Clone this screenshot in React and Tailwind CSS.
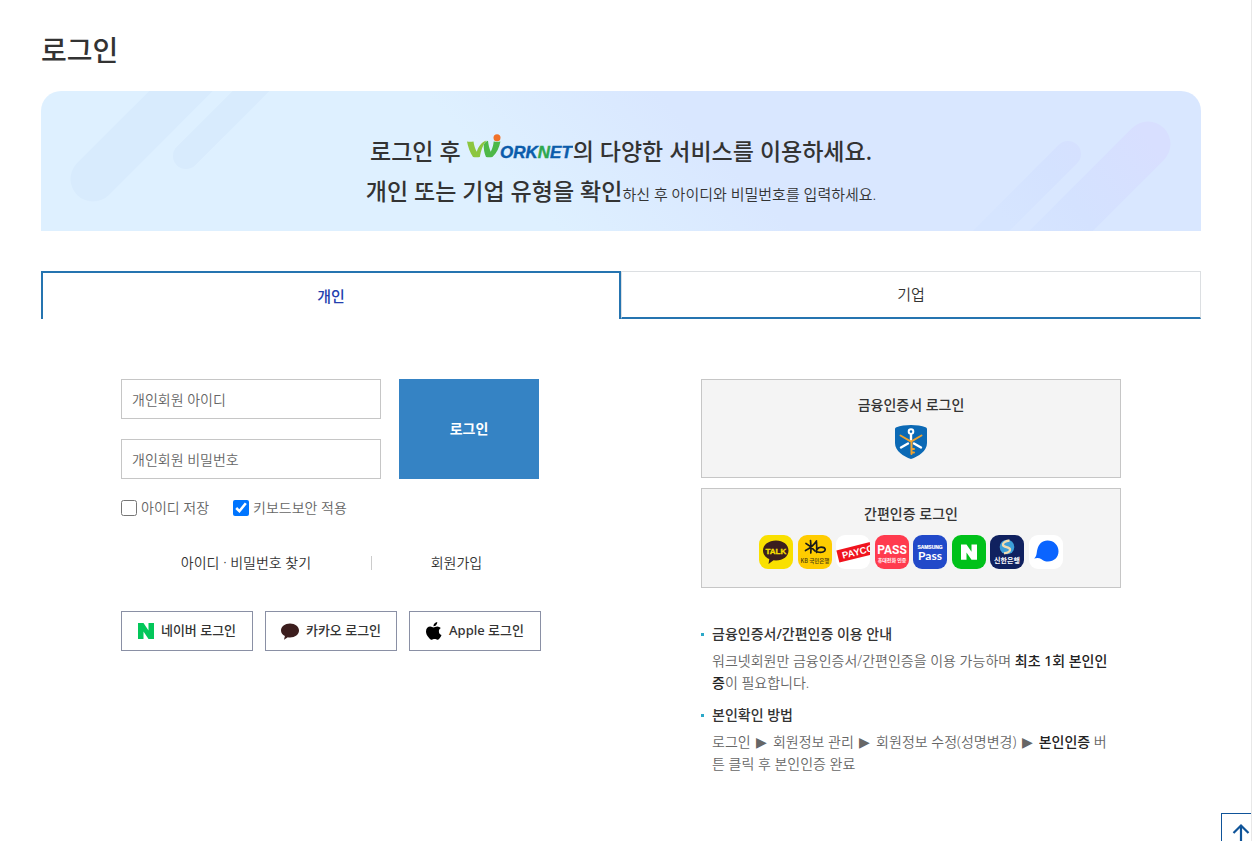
import React, { useState } from "react";

const fieldClass =
  "h-10 w-full border border-[#c6c6c6] bg-white px-[10px] text-sm text-[#333] placeholder:text-[#666] outline-none focus:border-[#2574b0]";

function WorknetLogo() {
  return (
    <svg className="inline-block h-[26px] w-[106px] align-baseline" viewBox="0 0 106 26" role="img" aria-label="WORKNET">
      <path d="M0 7.500c2.500 .6 4.500 .4 6.500-.1 .6 4 1.600 7.300 3.300 10.300C11.500 12.500 14 8.500 19.500 6.500c-3.500 4-5.600 10-6.700 16.500-2 .4-4.600 .4-6.800 0C3 18.500 1 13 0 7.500z" fill="#8cc63f" />
      <path d="M16.800 10.500c1.200-2 2.600-3.200 4.200-3.700 .5 4 1.200 7.500 2.700 11 1.800-3.200 2.600-6.500 3-10.300 2.300 .5 4.500 .4 6.700-.1-1 6-3.600 11.300-8 15.600-2.200 .5-4.400 .4-6.400 0-1.800-4-2.400-8-2.200-12.500z" fill="#4db848" />
      <circle cx="30" cy="3.800" r="3.500" fill="#f1722a" />
      <text x="33" y="23.500" fontFamily="'Liberation Sans', sans-serif" fontSize="17" fontWeight="700" fontStyle="italic" fill="#0b5cab" stroke="#0b5cab" strokeWidth=".4">
        ORK<tspan fill="#2fa84f" stroke="#2fa84f">N</tspan>ET
      </text>
    </svg>
  );
}

function BannerShapes() {
  return (
    <>
      <svg className="absolute left-0 top-0 h-[140px] w-[240px]" viewBox="0 0 240 140" aria-hidden="true">
        <g stroke="#d8ebfd" strokeLinecap="round">
          <path d="M52 88 160-20" strokeWidth="45" />
          <path d="M145 65 225-15" strokeWidth="26" />
        </g>
      </svg>
      <svg className="absolute right-0 top-0 h-[140px] w-[240px]" viewBox="0 0 240 140" aria-hidden="true">
        <defs>
          <linearGradient id="violet" gradientUnits="userSpaceOnUse" x1="60" y1="150" x2="190" y2="50">
            <stop offset="0" stopColor="#d6e5ff" />
            <stop offset="0.4" stopColor="#d4e2ff" />
            <stop offset="1" stopColor="#d8dfff" />
          </linearGradient>
        </defs>
        <g stroke="url(#violet)" strokeLinecap="round">
          <path d="M187 53 67 173" strokeWidth="45" />
          <path d="M107 63 0 170" strokeWidth="26" />
        </g>
      </svg>
    </>
  );
}

function NaverMark() {
  return (
    <svg className="size-[16px]" viewBox="0 0 16 16" aria-hidden="true">
      <path d="M0 0h5.500l5 7.500V0H16v16h-5.500l-5-7.500V16H0z" fill="#03c75a" />
    </svg>
  );
}

function KakaoMark() {
  return (
    <svg className="h-[17px] w-[18px]" viewBox="0 0 18 17" aria-hidden="true">
      <path d="M9 .5c5 0 9 3 9 6.900s-4 7-9 7c-.8 0-1.500-.1-2.200-.2L3 16.800l.9-3.900C1.500 11.700 0 9.700 0 7.400 0 3.500 4 .5 9 .5z" fill="#3c1e1e" />
    </svg>
  );
}

function AppleMark() {
  return (
    <svg className="h-[18px] w-[16px]" viewBox="0 0 16 18" aria-hidden="true">
      <path d="M11.200 0c.2 1.100-.3 2.200-1 3-.7.8-1.700 1.300-2.700 1.200-.1-1.100.4-2.100 1-2.800C9.200.6 10.300.1 11.200 0zM14.800 6c-1.300.8-2 1.900-1.900 3.400 0 1.700 1 2.900 2.600 3.500-.4 1.200-1 2.300-1.800 3.300-.6.9-1.300 1.500-2.300 1.500s-1.500-.6-2.800-.6-1.900.6-2.800.6c-1.100 0-1.900-.8-2.700-1.800C.9 13.700 0 11.700 0 9.500 0 6.500 2 4.600 4.300 4.600c1.300 0 2.300.8 3.200.8.900 0 2.200-.9 3.700-.9 1.500.1 2.700.6 3.600 1.500z" fill="#000" />
    </svg>
  );
}

function ShieldIcon() {
  return (
    <svg className="h-[34px] w-[32px]" viewBox="0 0 32 34" aria-hidden="true">
      <path d="M16 0c5 0 11 .9 14.500 2.200.9.3 1.500 1 1.500 2V18c0 8-8.500 13.500-16 16C8.500 31.500 0 26 0 18V4.200c0-1 .6-1.700 1.500-2C5 .9 11 0 16 0z" fill="#0b69b5" />
      <g fill="none" strokeLinecap="round">
        <path d="M13 18.500 6 22.500M19 18.500l7 4M16 10v5" stroke="#fff" strokeWidth="2.400" />
        <circle cx="16" cy="6.600" r="2.300" stroke="#fff" strokeWidth="2" />
        <path d="M5.500 10.500 16 16.500l10.500-6M16.500 16.500V29M16.500 24h2.500M16.500 27.500h2.500" stroke="#f0a22e" strokeWidth="2" />
      </g>
    </svg>
  );
}

function Tile({ fill, label, children }) {
  return (
    <svg className="size-[34px] overflow-hidden rounded-[9px]" viewBox="0 0 34 34" role="img" aria-label={label}>
      <rect width="34" height="34" fill={fill} />
      {children}
    </svg>
  );
}

const kr = "'Noto Sans CJK KR', sans-serif";

function CertTiles() {
  return (
    <span className="flex w-[304px] justify-between">
      <Tile fill="#f9e000" label="카카오톡">
        <path d="M17 5.500c7.200 0 12.500 4.200 12.500 10S24.200 25.500 17 25.500l-2.500-.2L9.500 29l.8-4.900C6.500 22.400 4 19.300 4 15.500c0-5.800 5.800-10 13-10z" fill="#3b1f1e" />
        <text x="16.800" y="19" textAnchor="middle" fontFamily="'Liberation Sans', sans-serif" fontSize="8" fontWeight="700" fill="#f9e000" stroke="#f9e000" strokeWidth=".3">TALK</text>
      </Tile>
      <Tile fill="#ffcc00" label="KB국민은행">
        <path d="M12.500 5.500c.6 4 .8 8 .3 12.500M8 8.500c3.500 1.800 6 4 9 7.500M18.500 6c-2.500 4-6 7-11 9.500M18.500 7c.3 4 .3 7 .1 10.500M19 14.500c1-1.600 2.500-2.300 4-2.300 2.500 0 4.200 1 4.200 2.600 0 2-3.500 3.300-7.500 2.200" fill="none" stroke="#1a1a1a" strokeWidth="1.700" strokeLinecap="round" />
        <text x="17" y="27.500" textAnchor="middle" fontFamily={kr} fontSize="5.500" fontWeight="500" fill="#4a3a10">KB 국민은행</text>
      </Tile>
      <Tile fill="#ffffff" label="PAYCO">
        <g transform="rotate(-14 17 18)">
          <rect x="1.500" y="11.500" width="40" height="12.500" fill="#f0141e" />
          <text x="6" y="21.300" fontFamily="'Liberation Sans', sans-serif" fontSize="9.500" fontWeight="700" fill="#fff">PAYCO</text>
        </g>
      </Tile>
      <Tile fill="#ff3b4e" label="PASS">
        <text x="17" y="18.500" textAnchor="middle" fontFamily="'Liberation Sans Narrow', Roboto, sans-serif" fontSize="12" fontWeight="700" fill="#fff">PASS</text>
        <text x="17" y="26.500" textAnchor="middle" fontFamily={kr} fontSize="5" fontWeight="700" fill="#fff">휴대전화 인증</text>
      </Tile>
      <Tile fill="#2149c9" label="SAMSUNG Pass">
        <text x="17" y="14" textAnchor="middle" fontFamily="'Liberation Sans', sans-serif" fontSize="4.900" fontWeight="700" fill="#fff" stroke="#fff" strokeWidth=".2">SAMSUNG</text>
        <text x="17" y="24.500" textAnchor="middle" fontFamily="Lato, sans-serif" fontSize="12" fontWeight="700" fill="#fff">Pass</text>
      </Tile>
      <Tile fill="#00c11a" label="네이버">
        <path d="M9 9.500h5.500l5 7.300V9.500H25v15.300h-5.500l-5-7.300v7.300H9z" fill="#fff" />
      </Tile>
      <Tile fill="#10215f" label="신한은행">
        <circle cx="17" cy="12" r="7.300" fill="#3d9fd8" />
        <path d="M19.500 5.500c-4 .5-7 2.300-6.500 4.500.6 2.500 6.500 1.800 7 4.200.3 1.900-2.500 3.600-6 4.200" fill="none" stroke="#f2dcae" strokeWidth="2.300" />
        <text x="17" y="27.800" textAnchor="middle" fontFamily={kr} fontSize="7" fontWeight="700" fill="#fff">신한은행</text>
      </Tile>
      <Tile fill="#ffffff" label="토스">
        <path d="M18.500 5.500c6.500 0 11 4.800 11 10.800s-4.500 10.300-10.500 10.300c-2.600 0-4.600-.8-6.500-2.300-2-1.500-4.500-1.800-7.300-.8 2.800-3 2.200-5 3-8.500 1.300-5.700 4.800-9.500 10.300-9.500z" fill="#0a64ff" />
      </Tile>
    </span>
  );
}

function Guide({ title, children }) {
  return (
    <li className="relative pl-[11px] pr-[6px]">
      <span className="absolute left-0 top-[10px] size-[3px] bg-[#2ba8c8]" />
      <h2 className="text-sm leading-[22px] font-medium text-[#333]">{title}</h2>
      <p className="mt-[5px] text-sm leading-[22px] text-[#666]">{children}</p>
    </li>
  );
}

function Step() {
  return <span className="mx-[2px] font-['DejaVu_Sans',sans-serif] text-sm leading-none">▶</span>;
}

const socials = [
  { name: "네이버 로그인", mark: <NaverMark /> },
  { name: "카카오 로그인", mark: <KakaoMark /> },
  { name: "Apple 로그인", mark: <AppleMark /> },
];

export default function App() {
  const [tab, setTab] = useState("개인");
  const [saveId, setSaveId] = useState(false);
  const [secure, setSecure] = useState(true);

  return (
    <div className="min-h-screen border-r border-[#e8e8e8] bg-white pl-[41px] pr-[50px] pb-16 font-['Noto_Sans','Noto_Sans_CJK_KR',sans-serif] font-[350] text-[#333]">
      <h1 className="pt-[30px] text-[28px] leading-[40px] font-medium">로그인</h1>

      <section className="relative mt-[21px] overflow-hidden rounded-t-[20px] bg-[linear-gradient(45deg,#def0ff_40%,#d9e7ff_58%)] pt-10 pb-5 text-center text-[23px] leading-[40px]">
        <BannerShapes />
        <p className="relative font-medium">
          로그인 후 <WorknetLogo />의 다양한 서비스를 이용하세요.
        </p>
        <p className="relative">
          <strong className="font-medium">개인 또는 기업 유형을 확인</strong>
          <span className="text-[15px] leading-none">하신 후 아이디와 비밀번호를 입력하세요.</span>
        </p>
      </section>

      <div role="tablist" className="mt-10 grid h-12 grid-cols-2">
        {["개인", "기업"].map((name) => (
          <button
            key={name}
            type="button"
            role="tab"
            aria-selected={tab === name}
            onClick={() => setTab(name)}
            className={
              tab === name
                ? "border-2 border-b-0 border-[#2574b0] text-[15px] font-medium text-[#233fae]"
                : "border border-b-2 border-[#dcdfe2] border-b-[#2574b0] text-[15px]"
            }
          >
            {name}
          </button>
        ))}
      </div>

      <main className="grid grid-cols-2 pt-[60px]">
        <form className="px-20" onSubmit={(e) => e.preventDefault()}>
          <div className="flex gap-[18px]">
            <div className="flex w-[260px] flex-col gap-5">
              <input aria-label="개인회원 아이디" type="text" placeholder="개인회원 아이디" className={fieldClass} />
              <input aria-label="개인회원 비밀번호" type="password" placeholder="개인회원 비밀번호" className={fieldClass} />
            </div>
            <button type="submit" className="w-[140px] bg-[#3583c4] text-sm font-bold text-white">
              로그인
            </button>
          </div>

          <div className="mt-[18px] flex gap-6 text-sm leading-[22px] text-[#666]">
            <label className="flex items-center gap-1">
              <input type="checkbox" checked={saveId} onChange={(e) => setSaveId(e.target.checked)} className="size-4" />
              아이디 저장
            </label>
            <label className="flex items-center gap-1">
              <input type="checkbox" checked={secure} onChange={(e) => setSecure(e.target.checked)} className="size-4" />
              키보드보안 적용
            </label>
          </div>

          <div className="mt-[33px] flex items-center text-sm leading-[22px]">
            <a href="#find" className="w-[250px] text-center">아이디 · 비밀번호 찾기</a>
            <span className="h-[14px] w-px bg-[#ccc]" />
            <a href="#join" className="flex-1 text-center">회원가입</a>
          </div>

          <div className="mt-[37px] grid grid-cols-3 gap-3">
            {socials.map((s) => (
              <button key={s.name} type="button" className="flex h-10 items-center justify-center gap-[7px] border border-[#8a90a5] text-[13px] font-medium">
                {s.mark}
                {s.name}
              </button>
            ))}
          </div>
        </form>

        <div className="px-20">
          <div className="flex flex-col gap-[10px]">
            <button type="button" className="flex h-[99px] flex-col items-center border border-[#c6c6c6] bg-[#f4f4f4] pt-[14px] text-sm leading-[22px] font-medium">
              금융인증서 로그인
              <span className="mt-[9px]"><ShieldIcon /></span>
            </button>
            <button type="button" className="flex h-[100px] flex-col items-center border border-[#c6c6c6] bg-[#f4f4f4] pt-[14px] text-sm leading-[22px] font-medium">
              간편인증 로그인
              <span className="mt-[10px]"><CertTiles /></span>
            </button>
          </div>

          <ul className="mt-[35px] flex flex-col gap-[10px]">
            <Guide title="금융인증서/간편인증 이용 안내">
              워크넷회원만 금융인증서/간편인증을 이용 가능하며 <strong className="font-medium text-[#222]">최초 1회 본인인증</strong>이 필요합니다.
            </Guide>
            <Guide title="본인확인 방법">
              로그인 <Step /> 회원정보 관리 <Step /> 회원정보 수정(성명변경) <Step /> <strong className="font-medium text-[#222]">본인인증</strong> 버튼 클릭 후 본인인증 완료
            </Guide>
          </ul>
        </div>
      </main>

      <button type="button" aria-label="맨 위로" className="fixed right-px -bottom-3 flex h-10 w-[30px] justify-start overflow-hidden border border-r-0 border-[#0f5499] bg-white pt-[9px] pl-[10px]">
        <svg className="h-[20px] w-[18px] shrink-0" viewBox="0 0 18 20" aria-hidden="true">
          <path d="M9 20V2.500M1.500 10 9 2.500l7.500 7.500" fill="none" stroke="#0f5499" strokeWidth="2.200" />
        </svg>
      </button>
    </div>
  );
}
